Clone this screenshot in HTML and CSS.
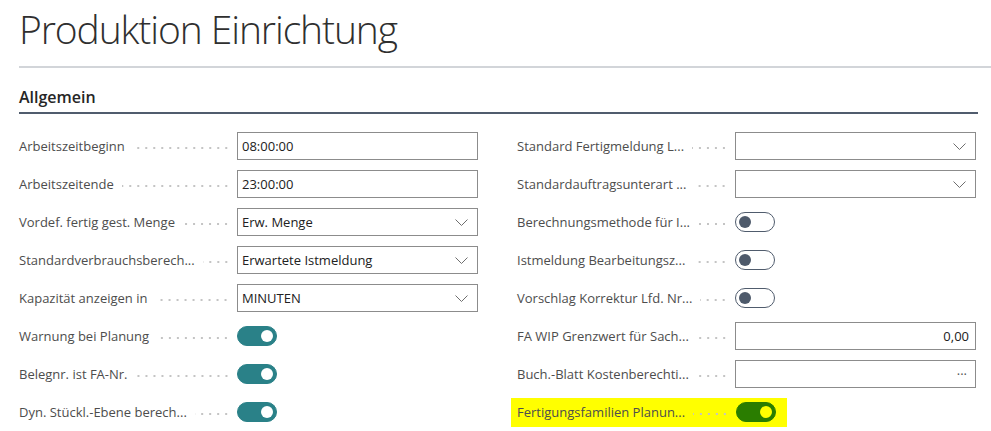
FILE: index.html
```html
<!DOCTYPE html>
<html lang="de">
<head>
  <meta charset="UTF-8">
  <meta name="viewport" content="width=device-width, initial-scale=1.0">
  <title>Produktion Einrichtung</title>
  <link rel="stylesheet" href="styles.css">
</head>
<body>
  <div class="page">
    <h1 class="page-title">Produktion Einrichtung</h1>

    <section class="fasttab">
      <h2 class="fasttab-title">Allgemein</h2>

      <div class="fields">
        <!-- left column -->
        <div class="column">
          <div class="field">
            <span class="caption">Arbeitszeitbeginn</span><span class="leader"></span>
            <div class="control input">08:00:00</div>
          </div>
          <div class="field">
            <span class="caption">Arbeitszeitende</span><span class="leader"></span>
            <div class="control input">23:00:00</div>
          </div>
          <div class="field">
            <span class="caption">Vordef. fertig gest. Menge</span><span class="leader"></span>
            <div class="control input select">Erw. Menge<svg class="chevron" viewBox="0 0 13 7"><polyline points="0.5,0.5 6.5,6.5 12.5,0.5"/></svg></div>
          </div>
          <div class="field">
            <span class="caption">Standardverbrauchsberech...</span><span class="leader"></span>
            <div class="control input select">Erwartete Istmeldung<svg class="chevron" viewBox="0 0 13 7"><polyline points="0.5,0.5 6.5,6.5 12.5,0.5"/></svg></div>
          </div>
          <div class="field">
            <span class="caption">Kapazität anzeigen in</span><span class="leader"></span>
            <div class="control input select">MINUTEN<svg class="chevron" viewBox="0 0 13 7"><polyline points="0.5,0.5 6.5,6.5 12.5,0.5"/></svg></div>
          </div>
          <div class="field">
            <span class="caption">Warnung bei Planung</span><span class="leader"></span>
            <div class="control"><span class="toggle on"></span></div>
          </div>
          <div class="field">
            <span class="caption">Belegnr. ist FA-Nr.</span><span class="leader"></span>
            <div class="control"><span class="toggle on"></span></div>
          </div>
          <div class="field">
            <span class="caption">Dyn. Stückl.-Ebene berech...</span><span class="leader"></span>
            <div class="control"><span class="toggle on"></span></div>
          </div>
        </div>

        <!-- right column -->
        <div class="column">
          <div class="field">
            <span class="caption">Standard Fertigmeldung L...</span><span class="leader"></span>
            <div class="control input select"><svg class="chevron" viewBox="0 0 13 7"><polyline points="0.5,0.5 6.5,6.5 12.5,0.5"/></svg></div>
          </div>
          <div class="field">
            <span class="caption">Standardauftragsunterart ...</span><span class="leader"></span>
            <div class="control input select"><svg class="chevron" viewBox="0 0 13 7"><polyline points="0.5,0.5 6.5,6.5 12.5,0.5"/></svg></div>
          </div>
          <div class="field">
            <span class="caption">Berechnungsmethode für I...</span><span class="leader"></span>
            <div class="control"><span class="toggle"></span></div>
          </div>
          <div class="field">
            <span class="caption">Istmeldung Bearbeitungsz...</span><span class="leader"></span>
            <div class="control"><span class="toggle"></span></div>
          </div>
          <div class="field">
            <span class="caption">Vorschlag Korrektur Lfd. Nr...</span><span class="leader"></span>
            <div class="control"><span class="toggle"></span></div>
          </div>
          <div class="field">
            <span class="caption">FA WIP Grenzwert für Sach...</span><span class="leader"></span>
            <div class="control input number">0,00</div>
          </div>
          <div class="field">
            <span class="caption">Buch.-Blatt Kostenberechti...</span><span class="leader"></span>
            <div class="control input number lookup">···</div>
          </div>
          <div class="field">
            <div class="marked">
              <span class="caption">Fertigungsfamilien Planun...</span><span class="leader"></span>
              <div class="control"><span class="toggle on green"></span></div>
            </div>
          </div>
        </div>
      </div>
    </section>
  </div>
</body>
</html>
```

FILE: styles.css
```css
body {
  margin: 0;
  background: #fff;
  color: #333;
  font-family: "Segoe UI", "Open Sans", sans-serif;
}
.page {
  padding-left: 19px;
}
.page-title {
  margin: 0;
  height: 68px;
  font-size: 39px;
  font-weight: 300;
  line-height: 58px;
  color: #2f2f2f;
  border-bottom: 2px solid #d2d5d9;
  box-sizing: border-box;
  letter-spacing: -1.1px;
}
.fasttab {
  width: 959px;
}
.fasttab-title {
  margin: 0;
  padding-top: 17px;
  height: 46px;
  box-sizing: border-box;
  font-size: 16px;
  font-weight: 600;
  line-height: 24px;
  color: #262626;
  border-bottom: 2px solid #505c6d;
}
.fields {
  display: grid;
  grid-template-columns: 459px 459px;
  column-gap: 39px;
  padding-top: 13px;
}
.field {
  display: flex;
  align-items: center;
  height: 38px;
  font-size: 13px;
  color: #4d4d4d;
}
.caption {
  white-space: nowrap;
}
.leader {
  flex: 1;
  height: 2px;
  margin: 3px 7px 0 8px;
  background: radial-gradient(circle, #c4c4c4 0.9px, transparent 1.1px) right center / 8px 2px repeat-x;
}
.control {
  width: 241px;
  display: flex;
  align-items: center;
}
.input {
  height: 28px;
  box-sizing: border-box;
  border: 1px solid #8c8c8c;
  padding: 0 6px 0 4px;
  color: #212121;
}
.select {
  justify-content: space-between;
}
.chevron {
  margin-left: auto;
  margin-right: 3px;
  width: 13px;
  height: 7px;
  fill: none;
  stroke: #6e6e6e;
  stroke-width: 1;
}
.number {
  justify-content: flex-end;
}
.lookup {
  padding-right: 8px;
  color: #555;
}
.toggle {
  position: relative;
  width: 40px;
  height: 20px;
  box-sizing: border-box;
  border: 1px solid #505c6d;
  border-radius: 10px;
}
.toggle::after {
  content: "";
  position: absolute;
  top: 3px;
  left: 3px;
  width: 12px;
  height: 12px;
  border-radius: 50%;
  background: #4e5a6b;
}
.toggle.on {
  background: #2a8188;
  border-color: #2a8188;
}
.toggle.on::after {
  left: auto;
  right: 3px;
  background: #fff;
}
.toggle.green {
  background: #2a7d00;
  border-color: #2a7d00;
}
.toggle.green::after {
  background: #ffff00;
}
.marked {
  display: flex;
  align-items: center;
  height: 29px;
  margin-left: -6px;
  padding: 0 11px 0 6px;
  background: #ffff00;
  width: 259px;
  flex: none;
}
.marked .control {
  width: 40px;
}
```
